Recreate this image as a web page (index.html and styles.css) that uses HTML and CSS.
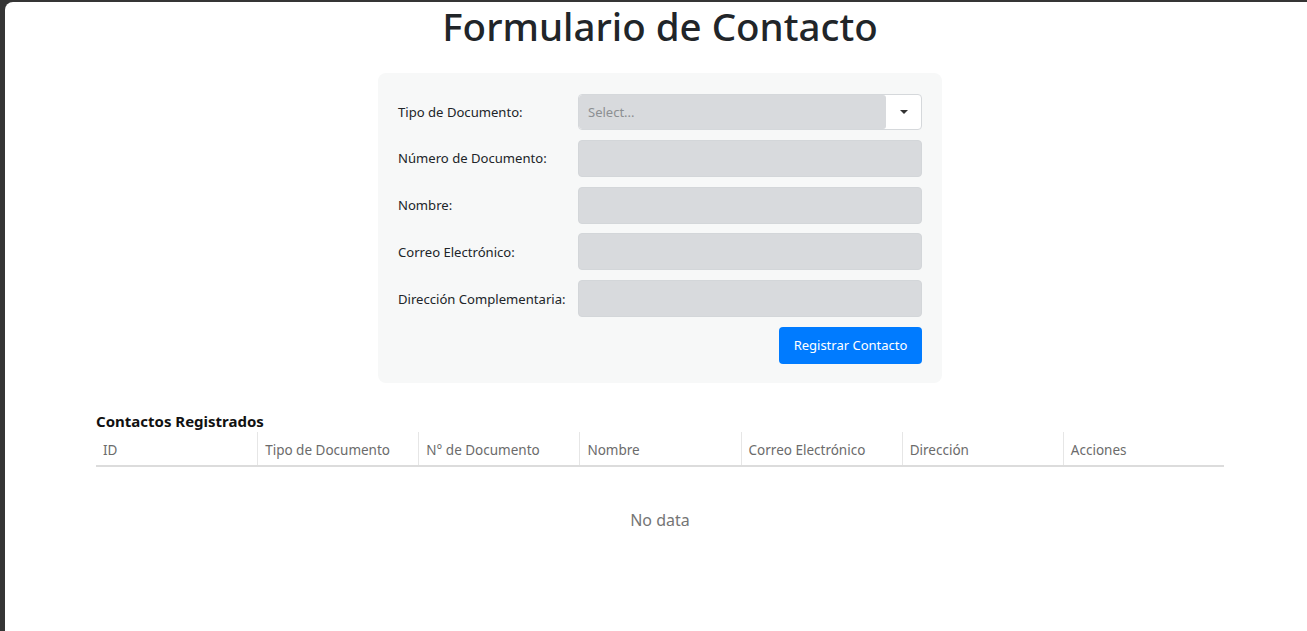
FILE: index.html
```html
<!DOCTYPE html>
<html lang="es">
<head>
<meta charset="utf-8">
<title>Formulario de Contacto</title>
<link rel="stylesheet" href="styles.css">
</head>
<body>
<div class="frame">
  <main class="page">
    <h1 class="title">Formulario de Contacto</h1>
    <form class="card">
      <div class="row">
        <label class="label">Tipo de Documento:</label>
        <div class="select">
          <span class="select-value">Select...</span>
          <span class="select-btn"><svg width="10" height="6" viewBox="0 0 10 6"><path d="M1 1h8L5 5z" fill="#333"/></svg></span>
        </div>
      </div>
      <div class="row">
        <label class="label">Número de Documento:</label>
        <div class="input"></div>
      </div>
      <div class="row">
        <label class="label">Nombre:</label>
        <div class="input"></div>
      </div>
      <div class="row">
        <label class="label">Correo Electrónico:</label>
        <div class="input"></div>
      </div>
      <div class="row">
        <label class="label">Dirección Complementaria:</label>
        <div class="input"></div>
      </div>
      <div class="actions">
        <button type="button" class="btn">Registrar Contacto</button>
      </div>
    </form>
    <section class="table-wrap">
      <h2 class="subtitle">Contactos Registrados</h2>
      <div class="thead">
        <div class="th">ID</div>
        <div class="th">Tipo de Documento</div>
        <div class="th">N° de Documento</div>
        <div class="th">Nombre</div>
        <div class="th">Correo Electrónico</div>
        <div class="th">Dirección</div>
        <div class="th">Acciones</div>
      </div>
      <div class="empty">No data</div>
    </section>
  </main>
</div>
</body>
</html>
```
FILE: styles.css
```css
* { box-sizing: border-box; }
html, body { margin: 0; padding: 0; height: 100%; }
body {
  background: #353535;
  font-family: "Noto Sans", "Open Sans", sans-serif;
  color: #212529;
  overflow: hidden;
}
.frame {
  height: 100%;
  padding: 2px 0 0 5px;
}
.page {
  height: 100%;
  background: #fff;
  border-top-left-radius: 8px;
  padding: 0 0 0 8px;
  display: flex;
  flex-direction: column;
  align-items: center;
}
.title {
  margin: 0;
  font-size: 38.5px;
  font-weight: 500;
  line-height: 48px;
  padding-top: 0;
  color: #212529;
}
.card {
  margin-top: 23px;
  width: 564px;
  background: #f7f8f8;
  border-radius: 8px;
  padding: 20px 20px 19px 20px;
  display: flex;
  flex-direction: column;
  gap: 9.75px;
}
.row {
  display: flex;
  align-items: center;
  height: 37px;
}
.label {
  width: 180px;
  flex: none;
  font-size: 13.1px;
  color: #212529;
}
.input {
  flex: 1;
  height: 37px;
  background: #d8dadd;
  border: 1px solid #d3d6d9;
  border-radius: 4px;
}
.select {
  flex: 1;
  height: 36px;
  display: flex;
  border: 1px solid #d5d8db;
  border-radius: 4px;
  background: #fff;
  overflow: hidden;
}
.select-value {
  flex: 1;
  background: #d8dadd;
  border-radius: 3px;
  font-size: 13px;
  color: #8c8f92;
  display: flex;
  align-items: center;
  padding-left: 9px;
}
.select-btn {
  width: 35px;
  display: flex;
  align-items: center;
  justify-content: center;
}
.actions {
  display: flex;
  justify-content: flex-end;
}
.btn {
  height: 37px;
  width: 143px;
  border: none;
  border-radius: 4px;
  background: #007bff;
  color: #fff;
  font-family: inherit;
  font-size: 13px;
  padding: 0;
}
.table-wrap {
  width: 1128px;
  margin-top: 27px;
}
.subtitle {
  margin: 0;
  font-size: 15px;
  font-weight: 700;
  line-height: 22px;
  color: #111;
}
.thead {
  display: grid;
  grid-template-columns: repeat(7, 1fr);
  border-bottom: 2px solid #dcdcdc;
  height: 35px;
}
.th {
  font-size: 13.5px;
  color: #6b6b6b;
  padding: 9px 7px 0 7px;
  border-left: 1px solid #e6e6e6;
}
.th:first-child { border-left: none; }
.empty {
  text-align: center;
  font-size: 16px;
  color: #757575;
  padding-top: 42px;
}
```
